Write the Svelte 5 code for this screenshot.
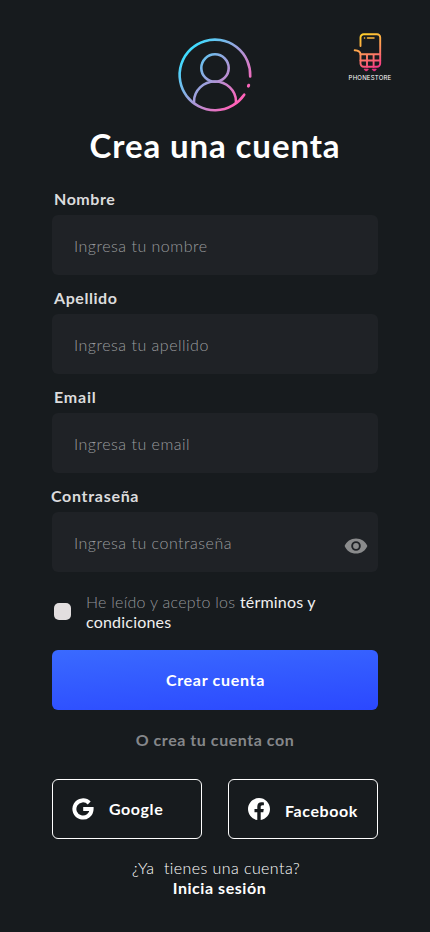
<script>
  const fields = [
    { id: 'nombre', label: 'Nombre', hint: 'Ingresa tu nombre', type: 'text' },
    { id: 'apellido', label: 'Apellido', hint: 'Ingresa tu apellido', type: 'text' },
    { id: 'email', label: 'Email', hint: 'Ingresa tu email', type: 'email' },
    { id: 'contrasena', label: 'Contraseña', hint: 'Ingresa tu contraseña', type: 'password' }
  ];
</script>

<main>
  <div class="brand">
    <svg width="30" height="40" viewBox="0 0 30 40" fill="none" stroke="url(#brand)" stroke-width="1.900" stroke-linecap="round" stroke-linejoin="round">
      <defs>
        <linearGradient id="brand" gradientUnits="userSpaceOnUse" x1="8" y1="1" x2="24" y2="38">
          <stop offset="0" stop-color="#ffd426" />
          <stop offset=".45" stop-color="#ff9a55" />
          <stop offset="1" stop-color="#f62d8c" />
        </linearGradient>
      </defs>
      <path d="M7.500 14V5.500a3.200 3.200 0 0 1 3.200-3.200H24a3.200 3.200 0 0 1 3.200 3.200V31.500a3.200 3.200 0 0 1-3.200 3.200H10.700a3.200 3.200 0 0 1-3.200-3.200V22.500C7.500 19.500 5 18.500 1.700 18.300" />
      <path d="M11.500 6h.1M14.500 6h6.500" stroke-width="1.500" />
      <path d="M7.500 22.200h19.700M7.500 28.500h19.700M14 22.200v12.500M20.600 22.200v12.500" />
      <path d="M11.500 37.200h3.800l-1.200 1.500h-1.400zM19.500 37.200h3.800l-1.200 1.500h-1.400z" fill="#f62d8c" stroke-width=".8" />
    </svg>
    <span>PHONESTORE</span>
  </div>

  <svg class="avatar" width="76" height="76" viewBox="0 0 76 76" fill="none" stroke="url(#avatar)" stroke-width="2.600" stroke-linecap="round">
    <defs>
      <linearGradient id="avatar" gradientUnits="userSpaceOnUse" x1="10" y1="16" x2="62" y2="62">
        <stop offset="0" stop-color="#3fdcff" />
        <stop offset="1" stop-color="#ff62b8" />
      </linearGradient>
    </defs>
    <path d="M73.200 39.500A35.300 35.300 0 1 0 67.200 57.700" />
    <path d="M71.700 48.200l-.3 .9" stroke-width="3" />
    <circle cx="38" cy="31" r="13.700" />
    <path d="M17 65.500V64.500a21 20 0 0 1 42 0V65.500" />
  </svg>

  <h1>Crea una cuenta</h1>

  <form>
    {#each fields as field}
      <div class="field">
        <label for={field.id} class={field.id}>{field.label}</label>
        <div class="box">
          <input id={field.id} type={field.type} placeholder={field.hint} />
          {#if field.type === 'password'}
            <svg class="eye" width="24" height="16" viewBox="0 0 24 16">
              <path fill="#8a8b8c" fill-rule="evenodd" d="M12 .4C6.800 .4 2.400 3.500 .6 8c1.800 4.500 6.200 7.600 11.400 7.600s9.600-3.100 11.400-7.600C21.600 3.500 17.200 .4 12 .4zM12 12.800a4.800 4.800 0 1 1 0-9.600 4.800 4.800 0 0 1 0 9.600z" />
              <circle cx="12" cy="8" r="2.900" fill="#8a8b8c" />
            </svg>
          {/if}
        </div>
      </div>
    {/each}

    <label class="terms">
      <input type="checkbox" />
      <span class="copy"><span class="read">He leído y acepto los</span> <span class="link">términos y</span><br /><span class="link">condiciones</span></span>
    </label>

    <button class="submit" type="button">Crear cuenta</button>
  </form>

  <p class="divider">O crea tu cuenta con</p>

  <div class="social">
    <button class="google" type="button">
      <svg width="22" height="22" viewBox="0 0 22 22" fill="none" stroke="#fff" stroke-width="4">
        <path d="M17.200 5A8.600 8.600 0 1 0 19.600 11H11.200" />
      </svg>
      <span>Google</span>
    </button>
    <button class="facebook" type="button">
      <svg width="22" height="22" viewBox="0 0 24 24" fill="#fff">
        <path d="M24 12.070C24 5.400 18.630 0 12 0S0 5.400 0 12.070C0 18.100 4.390 23.100 10.130 24v-8.440H7.080v-3.490h3.050V9.410c0-3.020 1.790-4.690 4.530-4.690 1.310 0 2.680.24 2.680.24v2.970h-1.510c-1.490 0-1.960.93-1.960 1.890v2.250h3.330l-.53 3.490h-2.800V24C19.610 23.100 24 18.100 24 12.070z" />
      </svg>
      <span>Facebook</span>
    </button>
  </div>

  <footer>
    <span class="ask">¿Ya&nbsp; tienes una cuenta?</span>
    <b>Inicia sesión</b>
  </footer>
</main>

<style>
  :global(body) { margin: 0; background: #171b1e; }
  main {
    position: relative;
    box-sizing: border-box;
    width: 430px;
    height: 932px;
    padding: 37px 52px 0;
    background: #171b1e;
    color: #fff;
    font: 16px/20px Lato, 'Open Sans', sans-serif;
    overflow: hidden;
    white-space: nowrap;
  }
  .brand {
    position: absolute;
    top: 32px;
    left: 340px;
    width: 60px;
    display: flex;
    flex-direction: column;
    align-items: center;
  }
  .brand svg { margin-right: 5px; }
  .brand span { font: 400 6px/9px Inter, sans-serif; letter-spacing: .22px; margin-top: 1px; }
  .avatar { display: block; margin: 0 auto; }
  h1 { margin: 12px 0 0; font-size: 33px; line-height: 40px; font-weight: 700; text-align: center; letter-spacing: .9px; }
  form { margin-top: 24px; }
  .field { margin-bottom: 13px; }
  .field label { display: block; height: 20px; margin: 0 0 6px 2px; font-weight: 700; color: #dcdcdd; letter-spacing: .55px; }
  .field label.contrasena { margin-left: -1px; letter-spacing: .7px; }
  .field label.email { letter-spacing: .8px; }
  .box { display: flex; align-items: center; height: 60px; border-radius: 6px; background: #1f2226; }
  .box input { flex: 1; min-width: 0; height: 20px; margin: 1px 0 0 22px; padding: 0; border: 0; outline: 0; background: none; color: #fff; font: 300 16px/20px Lato, sans-serif; letter-spacing: .5px; }
  .box input::placeholder { color: #9a9c9e; opacity: 1; }
  .eye { margin: 7px 10px 0 0; }
  .terms { display: flex; margin-top: 20px; padding-left: 2px; }
  .terms input { appearance: none; width: 17px; height: 17px; margin: 11px 15px 0 0; border-radius: 5px; background: #e2dedf; }
  .copy { font-weight: 300; letter-spacing: .26px; }
  .read { color: #94969a; }
  .link { font-weight: 400; letter-spacing: .2px; color: #f0f0f0; }
  button { font: 700 16px/20px Lato, sans-serif; color: #fff; padding: 0; }
  .submit { display: block; width: 326px; height: 60px; margin-top: 18px; padding-left: 1px; border: 0; border-radius: 6px; background: linear-gradient(176deg, #3a6aff, #2b48ff); letter-spacing: .7px; }
  .divider { margin: 20px 0 0; text-align: center; font-weight: 700; color: #85878a; letter-spacing: .55px; }
  .social { display: flex; justify-content: space-between; margin-top: 29px; }
  .social button { box-sizing: border-box; display: flex; align-items: center; width: 150px; height: 60px; padding-left: 19px; border: 1px solid #fff; border-radius: 6px; background: none; letter-spacing: .58px; }
  .social span { margin-left: 15px; }
  .facebook span { margin-top: 4px; }
  footer { display: flex; flex-direction: column; align-items: center; margin-top: 19px; }
  .ask { font-weight: 300; letter-spacing: .42px; margin-left: 2px; }
  footer b { letter-spacing: .55px; margin-left: 9px; }
</style>
